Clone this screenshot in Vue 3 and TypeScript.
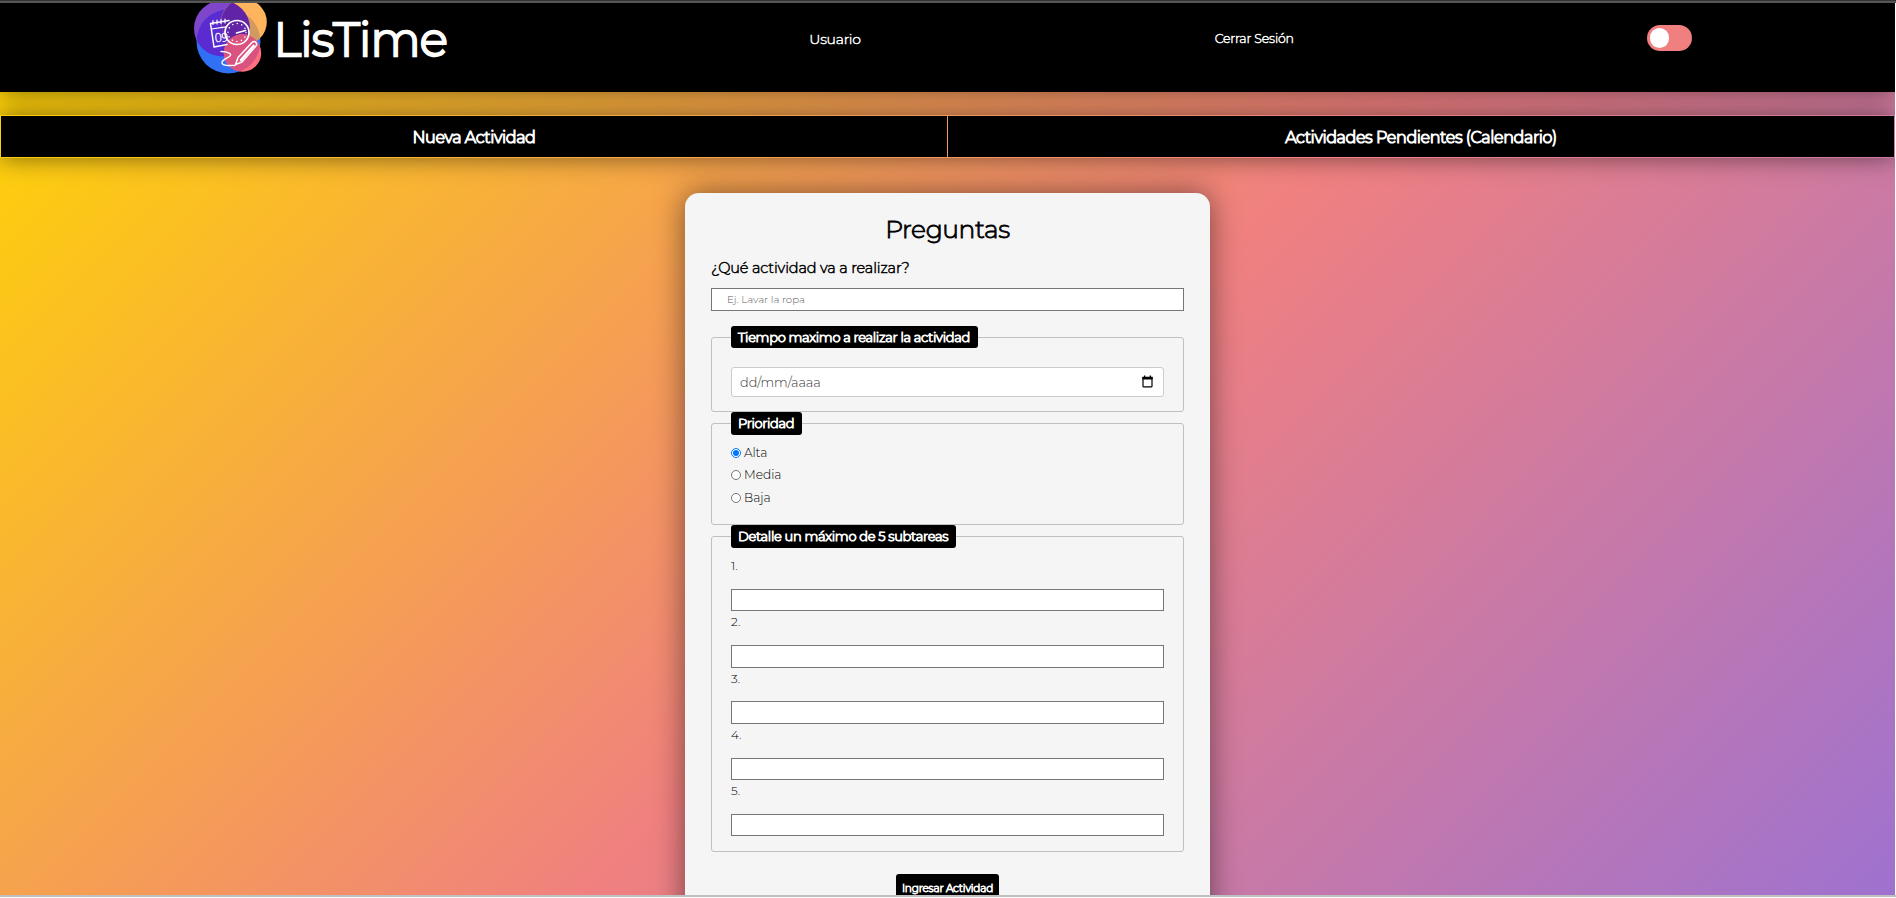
<script setup lang="ts">
import { ref } from 'vue'

const actividad = ref('')
const fecha = ref('')
const prioridad = ref('Alta')
const prioridades: string[] = ['Alta', 'Media', 'Baja']
const subtareas = ref<string[]>(['', '', '', '', ''])
const oscuro = ref(false)
</script>

<template>
  <div class="window">
    <div class="page">
      <header class="top">
        <div class="brand">
          <svg class="logo" width="73" height="71" viewBox="0 0 73 71">
            <defs>
              <clipPath id="c-blue"><circle cx="34.5" cy="38.5" r="32" /></clipPath>
              <clipPath id="c-purple"><circle cx="28" cy="25.5" r="28" /></clipPath>
            </defs>
            <circle cx="28" cy="25.5" r="28" fill="#7f45cb" />
            <circle cx="34.5" cy="38.5" r="32" fill="#2f70f4" />
            <circle cx="28" cy="25.5" r="28" fill="#5a2bd0" clip-path="url(#c-blue)" />
            <circle cx="50" cy="19" r="22.8" fill="#ffb45d" />
            <circle cx="50" cy="19" r="22.8" fill="#d39a60" clip-path="url(#c-blue)" />
            <circle cx="50" cy="19" r="22.8" fill="#6224a6" clip-path="url(#c-purple)" />
            <circle cx="48.5" cy="50" r="18.7" fill="#ff707f" />
            <circle cx="48.5" cy="50" r="18.7" fill="#da527f" clip-path="url(#c-blue)" />
            <g fill="none" stroke="#fff" stroke-linecap="round" stroke-linejoin="round">
              <path d="M33 41.5 L20 44 L16.5 20.5 L35 17.5" stroke-width="1.5" />
              <path d="M17.5 26 L32 23.8" stroke-width="1.2" />
              <path d="M19 17.5v4M23 17v4M27 16.5v4M31 16v4" stroke-width="1.2" />
              <circle cx="43" cy="29.5" r="12" stroke-width="1.7" />
              <circle cx="43" cy="29.5" r="9" stroke-width="1.5" stroke-dasharray="0.1 4.61" />
              <path d="M42.5 30 L51.5 27.5" stroke-width="1.6" />
              <path d="M27 48.5C34 48.5 39 51 35.5 53.5C31.5 56 27.5 57 28 60C29 64 36 62 41 62.5" stroke-width="1.4" />
              <path d="M41.5 61.5 L44 54.5 L58 39.5 Q60 37.5 62 39.5 Q63.5 41.5 61.5 43.5 L48 59 Z" stroke-width="1.5" />
              <path d="M47 57 L59.5 43" stroke-width="2.6" />
            </g>
            <text class="day" x="21" y="39.5" transform="rotate(-5 21 39)">0</text>
            <text class="day nine" x="27.5" y="39.5" transform="rotate(-5 21 39)">9</text>
          </svg>
          <span class="name">LisTime</span>
        </div>
        <a class="user">Usuario</a>
        <a class="logout">Cerrar Sesión</a>
        <button class="toggle" :class="{ on: oscuro }" @click="oscuro = !oscuro"><i class="knob"></i></button>
      </header>

      <nav class="tabs">
        <a class="tab">Nueva Actividad</a>
        <a class="tab">Actividades Pendientes (Calendario)</a>
      </nav>

      <form class="card" @submit.prevent>
        <h1 class="title">Preguntas</h1>
        <label class="question" for="actividad">¿Qué actividad va a realizar?</label>
        <input id="actividad" v-model="actividad" class="field main" placeholder="Ej. Lavar la ropa" />

        <fieldset class="group time">
          <legend class="l1">Tiempo maximo a realizar la actividad</legend>
          <div class="date">
            <input v-model="fecha" placeholder="dd/mm/aaaa" />
            <svg width="11" height="13" viewBox="0 0 11 13">
              <path d="M1 2.5h9v8.8q0 .5-.5.5h-8q-.5 0-.5-.5z" fill="none" stroke="#000" stroke-width="1.2" />
              <path d="M.4 1.7h10.2v2.7H.4zM2 .4h1.3v2H2zM7.7.4H9v2H7.7z" />
            </svg>
          </div>
        </fieldset>

        <fieldset class="group priority">
          <legend class="l2">Prioridad</legend>
          <label v-for="p in prioridades" :key="p" class="option">
            <input v-model="prioridad" type="radio" name="prioridad" :value="p" />
            <span>{{ p }}</span>
          </label>
        </fieldset>

        <fieldset class="group tasks">
          <legend class="l3">Detalle un máximo de 5 subtareas</legend>
          <div v-for="(_, i) in subtareas" :key="i" class="task">
            <span>{{ i + 1 }}.</span>
            <input v-model="subtareas[i]" class="field" />
          </div>
        </fieldset>

        <button class="submit" type="submit">Ingresar Actividad</button>
      </form>
    </div>
  </div>
</template>

<style>
html,
body {
  margin: 0;
  overflow: hidden;
  background: #fff;
}
</style>

<style scoped>
* {
  box-sizing: border-box;
}
.window {
  width: 1896px;
  height: 898px;
  padding-top: 3px;
  overflow: hidden;
  background:
    linear-gradient(#333 1px, #555 1px) 0 0 / 100% 3px no-repeat,
    linear-gradient(#bfbfbf, #bfbfbf) 0 895px / 100% 2px no-repeat,
    #fff;
  font-family: Montserrat, Inter, "Liberation Sans", sans-serif;
  font-weight: 300;
}
.page {
  width: 1895px;
  height: 892px;
  overflow: hidden;
  background: linear-gradient(135deg, #ffd700, #f08080, #9370db) 0 0 / 1895px 1075px no-repeat;
}
.top {
  height: 89px;
  padding: 0 203px 19px 194px;
  display: flex;
  justify-content: space-between;
  align-items: center;
  background: #000;
  color: #fff;
  box-shadow: 0 0 24px rgba(0, 0, 0, 0.5);
}
.brand {
  width: 262px;
  height: 70px;
  display: flex;
  align-items: center;
}
.logo {
  flex: none;
}
.day {
  fill: #fff;
  font: 500 13px "Open Sans", sans-serif;
}
.nine {
  font-size: 12.5px;
}
.name {
  margin-left: 6.5px;
  padding-top: 3px;
  font-size: 47px;
  line-height: 70px;
  letter-spacing: -0.8px;
  -webkit-text-stroke: 2.3px currentColor;
}
.user,
.logout {
  padding-top: 1px;
  white-space: nowrap;
  line-height: 20px;
  -webkit-text-stroke: 0.45px currentColor;
}
.user {
  width: 52px;
  font-size: 14px;
  letter-spacing: -0.25px;
}
.logout {
  width: 79px;
  font-size: 12.5px;
  letter-spacing: -0.15px;
}
.toggle {
  width: 45px;
  height: 26px;
  padding: 3px;
  border: 0;
  border-radius: 13px;
  background: #f08080;
}
.toggle.on {
  background: #9370db;
}
.knob {
  display: block;
  width: 19px;
  height: 20px;
  border-radius: 10px;
  background: #fff;
}
.toggle.on .knob {
  margin-left: auto;
}
.tabs {
  height: 43px;
  margin-top: 23px;
  padding: 1px;
  display: grid;
  grid-template-columns: 1fr 1fr;
  gap: 1px;
  box-shadow: 0 0 24px rgba(0, 0, 0, 0.5);
}
.tab {
  display: flex;
  justify-content: center;
  align-items: center;
  padding-top: 1px;
  background: #000;
  color: #fff;
  font-size: 16px;
  letter-spacing: -0.4px;
  white-space: nowrap;
  -webkit-text-stroke: 1.1px currentColor;
}
.card {
  width: 525px;
  height: 760px;
  margin: 35px auto 0;
  padding: 21px 26px;
  border-radius: 14px;
  background: #f5f5f5;
  box-shadow: 0 0 30px rgba(0, 0, 0, 0.5);
}
.title {
  margin: 0;
  height: 30px;
  line-height: 31px;
  text-align: center;
  font-size: 25px;
  font-weight: 300;
  letter-spacing: -0.4px;
  color: #000;
  -webkit-text-stroke: 0.8px currentColor;
}
.question {
  display: block;
  height: 21px;
  margin-top: 14px;
  line-height: 21px;
  font-size: 14.5px;
  letter-spacing: -0.13px;
  color: #000;
  -webkit-text-stroke: 0.5px currentColor;
}
.field {
  display: block;
  width: 100%;
  height: 22.4px;
  border: 1px solid #767676;
  border-radius: 0;
  background: #fff;
  outline: 0;
  font: inherit;
}
.main {
  height: 23px;
  margin-top: 9px;
  padding: 0 15px;
  font-size: 10.2px;
}
.main::placeholder {
  color: #606060;
}
.group {
  min-width: 0;
  margin: 0;
  padding: 0 19px;
  border: 1px solid #c0c0c0;
  border-radius: 3px;
}
legend {
  height: 23px;
  padding: 0 7px;
  border-radius: 3px;
  background: #000;
  color: #fff;
  font-size: 13px;
  line-height: 23px;
  letter-spacing: -0.29px;
  white-space: nowrap;
  -webkit-text-stroke: 0.95px currentColor;
}
.l1 {
  width: 247px;
  height: 22px;
}
.l2 {
  width: 71px;
}
.l3 {
  width: 225px;
}
.time {
  height: 86px;
  margin-top: 15px;
}
.date {
  display: flex;
  align-items: center;
  height: 30px;
  margin-top: 19px;
  padding: 1px 10px 0 8px;
  border: 1px solid #ccc;
  border-radius: 3px;
  background: #fff;
}
.date input {
  flex: 1;
  min-width: 0;
  padding: 0;
  border: 0;
  outline: 0;
  background: none;
  font: 300 12.8px/20px Montserrat, Inter, sans-serif;
}
.date input::placeholder {
  color: #333;
}
.date svg {
  margin-bottom: 3px;
}
.priority {
  height: 113px;
}
.option {
  display: flex;
  align-items: center;
  height: 22.5px;
  font-size: 12.2px;
  color: #000;
}
legend + .option {
  margin-top: 6.3px;
}
.option input {
  width: 10px;
  height: 10px;
  margin: 0 3px 0 0;
}
.option span {
  line-height: 16px;
}
.tasks {
  height: 327px;
}
.task {
  height: 56.2px;
  font-size: 12px;
  color: #000;
}
legend + .task {
  margin-top: 7.3px;
}
.task span {
  display: block;
  height: 33.8px;
  line-height: 21.6px;
}
.submit {
  display: block;
  width: 103px;
  height: 28px;
  margin: 22px auto 0;
  padding: 0;
  border: 0;
  border-radius: 3px;
  background: #000;
  color: #fff;
  font: 300 10.5px/30px Montserrat, Inter, sans-serif;
  letter-spacing: -0.17px;
  white-space: nowrap;
  -webkit-text-stroke: 0.8px currentColor;
}
</style>
